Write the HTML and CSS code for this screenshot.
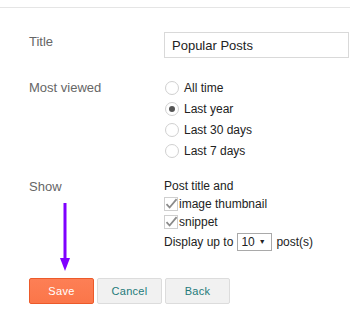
FILE: index.html
```html
<!DOCTYPE html>
<html lang="en">
  <head>
    <meta charset="UTF-8" />
    <meta name="viewport" content="width=device-width, initial-scale=1.0" />
    <title>Popular Posts</title>
    <link rel="stylesheet" href="styles.css">
  </head>
  <body>
    <div class="panel">
      <div class="row row-title">
        <div class="label">Title</div>
        <div class="field">
          <input type="text" class="text-input" value="Popular Posts" />
        </div>
      </div>

      <div class="row row-viewed">
        <div class="label">Most viewed</div>
        <div class="field options">
          <div class="option"><span class="radio"></span>All time</div>
          <div class="option"><span class="radio checked"></span>Last year</div>
          <div class="option"><span class="radio"></span>Last 30 days</div>
          <div class="option"><span class="radio"></span>Last 7 days</div>
        </div>
      </div>

      <div class="row row-show">
        <div class="label">Show</div>
        <div class="field show">
          <div class="line">Post title and</div>
          <div class="line">
            <svg class="check" width="14" height="14" viewBox="0 0 14 14">
              <rect x="0.5" y="0.5" width="13" height="13" fill="#fff" stroke="#cfcfcf" />
              <path d="M2.5 7.2 L5.6 10.5 L12.6 2.2" fill="none" stroke="#8a8a8a" stroke-width="1.8" />
            </svg>image thumbnail
          </div>
          <div class="line">
            <svg class="check" width="14" height="14" viewBox="0 0 14 14">
              <rect x="0.5" y="0.5" width="13" height="13" fill="#fff" stroke="#cfcfcf" />
              <path d="M2.5 7.2 L5.6 10.5 L12.6 2.2" fill="none" stroke="#8a8a8a" stroke-width="1.8" />
            </svg>snippet
          </div>
          <div class="line line-select">
            Display up to
            <span class="select">10 <span class="caret">&#9660;</span></span>
            post(s)
          </div>
        </div>
      </div>

      <div class="actions">
        <button type="button" class="btn btn-save">Save</button>
        <button type="button" class="btn">Cancel</button>
        <button type="button" class="btn">Back</button>
      </div>

      <!-- annotation arrow pointing at Save -->
      <svg class="arrow" width="14" height="70" viewBox="0 0 14 70">
        <rect x="5.5" y="0" width="3" height="58" fill="#7f00ff" />
        <path d="M2 55 L12 55 L7 68 Z" fill="#7f00ff" />
      </svg>
    </div>
  </body>
</html>
```

FILE: styles.css
```css
body {
  margin: 0;
  font-family: "Liberation Sans", Arial, sans-serif;
  background: #fff;
  color: #222;
}

.panel {
  position: relative;
  margin: 7px 3px 0 0;
  border-top: 1px solid #e5e5e5;
  padding: 0 0 20px 29px;
}

.row {
  display: grid;
  grid-template-columns: 135px 1fr;
}

.label {
  font-size: 13px;
  color: #666;
}

.row-title {
  margin-top: 24px;
}

.row-title .label {
  line-height: 18px;
  padding-top: 1px;
}

.text-input {
  box-sizing: border-box;
  width: 185px;
  height: 26px;
  margin: 0;
  padding: 0 7px;
  border: 1px solid #d9d9d9;
  font-family: inherit;
  font-size: 13px;
  color: #222;
  outline: none;
}

.row-viewed {
  margin-top: 19px;
}

.row-viewed .label {
  line-height: 21px;
}

.option {
  display: flex;
  align-items: center;
  height: 21px;
  font-size: 12px;
  color: #222;
}

.radio {
  box-sizing: border-box;
  width: 14px;
  height: 14px;
  margin: 0 5px 0 1px;
  border: 1px solid #d0d0d0;
  border-radius: 50%;
  background: #fff;
  display: flex;
  align-items: center;
  justify-content: center;
}

.radio.checked::after {
  content: "";
  width: 6px;
  height: 6px;
  border-radius: 50%;
  background: #555;
}

.row-show {
  margin-top: 16px;
}

.row-show .label {
  line-height: 20px;
}

.show {
  font-size: 12px;
  color: #222;
}

.line {
  display: flex;
  align-items: center;
  height: 18px;
}

.check {
  margin-right: 1px;
}

.line-select {
  height: 21px;
}

.select {
  display: inline-flex;
  align-items: center;
  box-sizing: border-box;
  height: 18px;
  width: 35px;
  margin: 0 4px;
  padding: 0 0 0 3px;
  border: 1px solid #a9a9a9;
  font-size: 12px;
}

.caret {
  font-size: 7px;
  margin-left: 4px;
}

.actions {
  display: flex;
  gap: 3px;
  margin-top: 26px;
}

.btn {
  box-sizing: border-box;
  width: 65px;
  height: 26px;
  margin: 0;
  padding: 0;
  border: 1px solid #dcdcdc;
  border-radius: 2px;
  background: #f1f1f1;
  color: #237a7a;
  font-family: "Liberation Sans", Arial, sans-serif;
  font-size: 11px;
  letter-spacing: 0.3px;
}

.btn-save {
  background: linear-gradient(#fd7f55, #fb7649);
  border-color: #ec5a2a;
  color: #fff;
}

.arrow {
  position: absolute;
  left: 58px;
  top: 195px;
}
```
